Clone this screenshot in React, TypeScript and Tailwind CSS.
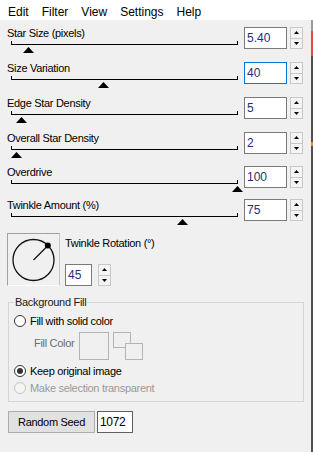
import React from "react";

type Row = {
  label: string;
  value: string;
  thumb: number;
  hClass: string;
  focused?: boolean;
};

const rows: Row[] = [
  { label: "Star Size (pixels)", value: "5.40", thumb: 28, hClass: "h-[35px]" },
  { label: "Size Variation", value: "40", thumb: 103, hClass: "h-[35px]", focused: true },
  { label: "Edge Star Density", value: "5", thumb: 21, hClass: "h-[35px]" },
  { label: "Overall Star Density", value: "2", thumb: 16, hClass: "h-[34px]" },
  { label: "Overdrive", value: "100", thumb: 237, hClass: "h-[33px]" },
  { label: "Twinkle Amount (%)", value: "75", thumb: 182, hClass: "h-[34px]" },
];

function Spinner() {
  return (
    <div className="flex flex-col w-[13px] h-[22px] border border-[#c8c8c8] bg-[#f4f4f4]">
      <div className="flex-1 flex items-center justify-center border-b border-[#c8c8c8]">
        <svg width="5" height="3" viewBox="0 0 5 3">
          <path d="M2.5 0 L5 3 L0 3 Z" fill="#000" />
        </svg>
      </div>
      <div className="flex-1 flex items-center justify-center">
        <svg width="5" height="3" viewBox="0 0 5 3">
          <path d="M0 0 L5 0 L2.5 3 Z" fill="#000" />
        </svg>
      </div>
    </div>
  );
}

function NumberBox({ value, focused, wClass }: { value: string; focused?: boolean; wClass: string }) {
  return (
    <div
      className={`${wClass} h-[22px] border ${
        focused ? "border-[#0078d7]" : "border-[#7a7a7a]"
      } bg-white pl-[2px] flex items-center text-[12px] leading-[12px] text-[#1f2f7a]`}
    >
      {value}
    </div>
  );
}

function SliderRow({ r }: { r: Row }) {
  return (
    <div className={`flex ${r.hClass}`}>
      <div className="relative w-[244px]">
        <div className="pl-[7px] mt-[1px] text-[11px] leading-[11px] tracking-[-0.3px] text-black">
          {r.label}
        </div>
        <div className="relative ml-[11px] mt-[5px] w-[227px] h-[1px] bg-black">
          <div className="absolute left-0 -top-[3px] w-[1px] h-[3px] bg-black" />
          <div className="absolute right-0 -top-[3px] w-[1px] h-[3px] bg-black" />
        </div>
        <svg
          className="absolute top-[20px]"
          style={{ left: r.thumb - 5.5 }}
          width="11"
          height="6"
          viewBox="0 0 11 6"
        >
          <path d="M5.5 0 L11 6 L0 6 Z" fill="#000" />
        </svg>
      </div>
      <NumberBox value={r.value} focused={r.focused} wClass="w-[43px]" />
      <div className="ml-[3px]">
        <Spinner />
      </div>
    </div>
  );
}

function Radio({ checked, disabled }: { checked?: boolean; disabled?: boolean }) {
  return (
    <span
      className={`w-[12px] h-[12px] rounded-full border flex items-center justify-center shrink-0 ${
        disabled ? "border-[#c4c4c4] bg-[#f4f4f4]" : "border-[#333333] bg-white"
      }`}
    >
      {checked && <span className="w-[6px] h-[6px] rounded-full bg-[#333333]" />}
    </span>
  );
}

export default function App() {
  return (
    <div className="w-[313px] h-[452px] overflow-hidden bg-[#f0f0f0] font-['Liberation_Sans',Arial,sans-serif] text-black flex flex-col">
      {/* Menu bar */}
      <div className="h-[20px] bg-white flex pl-[8px] pt-[6px] gap-[13px] text-[12px] leading-[12px] shrink-0">
        <span>Edit</span>
        <span>Filter</span>
        <span>View</span>
        <span>Settings</span>
        <span>Help</span>
      </div>

      <div className="flex flex-1">
        {/* Main dialog */}
        <div className="w-[311px] flex flex-col pt-[7px]">
          {rows.map((r) => (
            <SliderRow key={r.label} r={r} />
          ))}

          {/* Twinkle Rotation */}
          <div className="flex h-[53px]">
            <div className="ml-[7px] w-[53px] h-[53px] border-t border-l border-[#a0a0a0] border-r-[#c8c8c8] border-b border-r border-b-white">
              <svg width="51" height="51" viewBox="0 0 51 51">
                <circle cx="25.5" cy="26" r="20.5" fill="none" stroke="#111" strokeWidth="1.3" />
                <line x1="25.5" y1="26" x2="39.5" y2="12" stroke="#111" strokeWidth="1.3" />
                <circle cx="39.8" cy="11.6" r="3" fill="#000" />
              </svg>
            </div>
            <div className="ml-[5px] flex flex-col">
              <div className="mt-[5px] text-[11px] leading-[11px] tracking-[-0.3px]">
                Twinkle Rotation (°)
              </div>
              <div className="flex mt-[15px]">
                <NumberBox value="45" wClass="w-[27px]" />
                <div className="ml-[6px]">
                  <Spinner />
                </div>
              </div>
            </div>
          </div>

          {/* Background Fill group */}
          <div className="relative mt-[16px] ml-[8px] w-[296px] h-[100px] border border-[#d5d5d5] flex flex-col pl-[5px] pt-[12px] text-[11px] leading-[11px] tracking-[-0.3px]">
            <span className="absolute -top-[6px] left-[5px] px-[1px] bg-[#f0f0f0] text-[#1a1a1a]">
              Background Fill
            </span>
            <div className="flex items-center h-[12px] gap-[4px]">
              <Radio />
              <span>Fill with solid color</span>
            </div>
            <div className="flex mt-[5px] h-[28px]">
              <span className="ml-[20px] mt-[6px] w-[45px] text-[#6d6d6d]">Fill Color</span>
              <div className="w-[30px] h-[28px] border border-[#b4b4b4]" />
              <svg className="ml-[4px]" width="31" height="29" viewBox="0 0 31 29">
                <rect x="0.5" y="0.5" width="17" height="15" fill="none" stroke="#b4b4b4" />
                <rect x="12.5" y="11.5" width="17" height="16" fill="#f0f0f0" stroke="#b4b4b4" />
              </svg>
            </div>
            <div className="flex items-center h-[12px] gap-[4px] mt-[5px]">
              <Radio checked />
              <span>Keep original image</span>
            </div>
            <div className="flex items-center h-[12px] gap-[4px] mt-[5px]">
              <Radio disabled />
              <span className="text-[#9a9a9a]">Make selection transparent</span>
            </div>
          </div>

          {/* Random seed */}
          <div className="flex mt-[9px] ml-[8px] text-[11px] leading-[11px] tracking-[-0.3px]">
            <button className="w-[87px] h-[22px] bg-[#e1e1e1] border border-[#adadad] flex items-center justify-center">
              Random Seed
            </button>
            <div className="ml-[2px] w-[36px] h-[22px] border border-[#5f5f5f] bg-white flex items-center pl-[2px] text-[12px] leading-[12px]">
              1072
            </div>
          </div>
        </div>

        {/* Right edge strip (neighbouring window) */}
        <div className="w-[2px] flex flex-col">
          <div className="h-[11px] bg-[#9a9a9a]" />
          <div className="h-[25px] bg-[#e04848]" />
          <div className="h-[86px] bg-[#505050]" />
          <div className="h-[4px] bg-[#e08a30]" />
          <div className="flex-1 bg-[#505050]" />
        </div>
      </div>
    </div>
  );
}
